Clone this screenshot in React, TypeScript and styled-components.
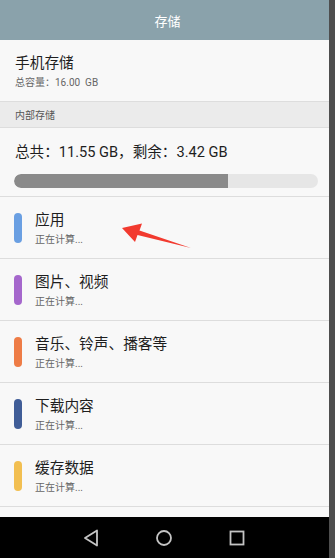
import React from "react";
import styled, { createGlobalStyle } from "styled-components";

const Global = createGlobalStyle`
  html, body { margin: 0; padding: 0; background: #000; }
  body { font-family: Roboto, "Noto Sans CJK SC", sans-serif; }
`;

const Page = styled.div`
  display: flex;
  width: 335px;
  height: 558px;
  overflow: hidden;
`;

const Screen = styled.div`
  position: relative;
  width: 329px;
  height: 558px;
  display: flex;
  flex-direction: column;
  background: #f8f8f8;
`;

const Strip = styled.div`
  width: 6px;
  height: 558px;
  background: #4e4e4e;
`;

const Header = styled.div`
  height: 40px;
  background: #8aa2ab;
  color: #fff;
  display: flex;
  align-items: center;
  justify-content: center;
  font-size: 13px;
  padding-left: 6px;
  box-sizing: border-box;
`;

const Block = styled.div<{ $h: number; $pt: number }>`
  height: ${(p) => p.$h}px;
  padding: ${(p) => p.$pt}px 15px 0 15px;
  box-sizing: border-box;
  border-bottom: 1px solid #dddddd;
`;

const Title = styled.div`
  font-size: 14.7px;
  line-height: 20px;
  color: #1e1e1e;
`;

const Sub = styled.div`
  font-size: 10px;
  line-height: 14px;
  color: #666;
  margin-top: 3px;
  white-space: pre;
`;

const Band = styled.div`
  height: 26px;
  background: #ebebeb;
  display: flex;
  align-items: center;
  padding-left: 15px;
  font-size: 10px;
  color: #555;
  border-bottom: 1px solid #dddddd;
  box-sizing: border-box;
`;

const Total = styled.div`
  font-size: 14.6px;
  line-height: 20px;
  color: #1e1e1e;
`;

const Track = styled.div`
  margin-top: 12px;
  width: 304px;
  margin-left: -1px;
  height: 14px;
  border-radius: 7px;
  background: #e6e6e6;
  overflow: hidden;
`;

const Fill = styled.div`
  height: 100%;
  background: #8a8a8a;
  border-radius: 7px 0 0 7px;
`;

const Item = styled.div`
  height: 62px;
  display: flex;
  align-items: center;
  padding-left: 14px;
  box-sizing: border-box;
  border-bottom: 1px solid #dddddd;
`;

const Pill = styled.div<{ $c: string }>`
  width: 8px;
  height: 30px;
  border-radius: 4px;
  background: ${(p) => p.$c};
  margin-right: 13px;
`;

const ItemText = styled.div`
  display: flex;
  flex-direction: column;
  margin-top: 1px;
`;

const Spacer = styled.div`
  flex: 1;
`;

const Nav = styled.div`
  height: 41px;
  background: #000;
  display: flex;
  align-items: center;
  justify-content: center;
  gap: 56px;
  padding-right: 2px;
`;

const Arrow = styled.svg`
  position: absolute;
  left: 118px;
  top: 220px;
`;

const items = [
  { c: "#6a9fe2", t: "应用" },
  { c: "#a567cc", t: "图片、视频" },
  { c: "#ee7c46", t: "音乐、铃声、播客等" },
  { c: "#405d97", t: "下载内容" },
  { c: "#f2bf51", t: "缓存数据" },
];

export default function App() {
  const used = (11.55 - 3.42) / 11.55;
  return (
    <Page>
      <Global />
      <Screen>
        <Header>存储</Header>
        <Block $h={62} $pt={13}>
          <Title>手机存储</Title>
          <Sub>{"总容量：16.00  GB"}</Sub>
        </Block>
        <Band>内部存储</Band>
        <Block $h={69} $pt={14}>
          <Total>总共：11.55 GB，剩余：3.42 GB</Total>
          <Track>
            <Fill style={{ width: `${used * 100}%` }} />
          </Track>
        </Block>
        {items.map((it) => (
          <Item key={it.t}>
            <Pill $c={it.c} />
            <ItemText>
              <Title>{it.t}</Title>
              <Sub>正在计算...</Sub>
            </ItemText>
          </Item>
        ))}
        <Spacer />
        <Nav>
          <svg width="16" height="18" viewBox="0 0 16 18">
            <path d="M14 1.5 L2 9 L14 16.5 Z" fill="none" stroke="#c4c4c4" strokeWidth="1.8" strokeLinejoin="round" />
          </svg>
          <svg width="18" height="18" viewBox="0 0 18 18">
            <circle cx="9" cy="9" r="7" fill="none" stroke="#c4c4c4" strokeWidth="1.8" />
          </svg>
          <svg width="16" height="16" viewBox="0 0 16 16">
            <rect x="1.5" y="1.5" width="13" height="13" fill="none" stroke="#c4c4c4" strokeWidth="1.8" />
          </svg>
        </Nav>
        <Arrow width="76" height="32" viewBox="0 0 76 32">
          <path d="M4 8 L24 3.5 L21.5 10.5 L73 28 L19.5 15 L17 22 Z" fill="#f23a2f" />
        </Arrow>
      </Screen>
      <Strip />
    </Page>
  );
}
